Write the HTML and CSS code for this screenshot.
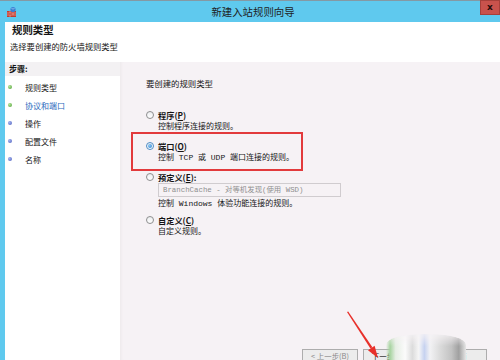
FILE: index.html
```html
<!DOCTYPE html>
<html lang="zh-CN">
<head>
  <meta charset="UTF-8">
  <title>新建入站规则向导</title>
  <link rel="stylesheet" href="styles.css">
</head>
<body>
  <div class="window">
    <div class="titlebar">
      <svg class="app-icon" viewBox="0 0 12 12">
        <rect x="1" y="5" width="9" height="6" fill="#c23b2e"/>
        <path d="M1 7h9M1 9h9M4 5v2M7 7v2M4 9v2" stroke="#f1b7ae" stroke-width="0.6"/>
        <circle cx="7" cy="3.5" r="2.6" fill="#3b7fd4"/>
        <path d="M5.5 2.5q1.5 1 3 0" stroke="#a9d6f5" stroke-width="0.7" fill="none"/>
      </svg>
      <div class="title">新建入站规则向导</div>
      <div class="close">x</div>
    </div>

    <div class="frame">
      <div class="header">
        <div class="header-title">规则类型</div>
        <div class="header-sub">选择要创建的防火墙规则类型</div>
      </div>

      <div class="main">
        <div class="steps">
          <div class="steps-head">步骤:</div>
          <ul class="step-list">
            <li class="step done">规则类型</li>
            <li class="step done current">协议和端口</li>
            <li class="step">操作</li>
            <li class="step">配置文件</li>
            <li class="step">名称</li>
          </ul>
        </div>

        <div class="content">
          <p class="prompt">要创建的规则类型</p>

          <div class="options">
            <div class="option first">
              <span class="radio"></span>
              <span class="label">程序(<u>P</u>)</span>
              <span class="desc">控制程序连接的规则。</span>
            </div>
            <div class="option picked">
              <span class="radio checked"></span>
              <span class="label">端口(<u>O</u>)</span>
              <span class="desc">控制 TCP 或 UDP 端口连接的规则。</span>
            </div>
            <div class="option">
              <span class="radio"></span>
              <span class="label">预定义(<u>E</u>):</span>
              <span class="combo">BranchCache - 对等机发现(使用 WSD)</span>
              <span class="desc spaced">控制 Windows 体验功能连接的规则。</span>
            </div>
            <div class="option last">
              <span class="radio"></span>
              <span class="label">自定义(<u>C</u>)</span>
              <span class="desc">自定义规则。</span>
            </div>
          </div>

          <div class="buttons">
            <button class="btn muted">&lt; 上一步(<u>B</u>)</button>
            <button class="btn">下一步(<u>N</u>) &gt;</button>
            <button class="btn cancel">取消</button>
          </div>
        </div>
      </div>
    </div>

    <div class="smudge"></div>
    <svg class="arrow" viewBox="0 0 45 55">
      <polygon points="7,7 8.2,6.4 32.4,42.2 30.4,43.6" fill="#e8302a"/>
      <polygon points="38,53 34.6,40.8 28,45.2" fill="#e8302a"/>
    </svg>
  </div>
</body>
</html>
```

FILE: styles.css
```css
* {
  box-sizing: border-box;
  margin: 0;
  padding: 0;
}
html, body {
  width: 500px;
  height: 360px;
  overflow: hidden;
}
body {
  font-family: "Noto Sans CJK SC", sans-serif;
  color: #151515;
  background: #fff;
}
u {
  text-decoration: underline;
}

.window {
  position: relative;
  width: 500px;
  height: 360px;
  display: flex;
  flex-direction: column;
  overflow: hidden;
}

/* title bar */
.titlebar {
  height: 22px;
  flex: none;
  display: flex;
  align-items: center;
  background: #5fc9ee;
  border-top: 1px solid #8499a4;
}
.app-icon {
  width: 12px;
  height: 12px;
  margin-left: 6px;
  flex: none;
}
.title {
  flex: 1;
  text-align: center;
  padding-left: 8px;
  font-size: 10.4px;
  color: #1e1e1e;
}
.close {
  align-self: flex-start;
  width: 20px;
  height: 15px;
  margin-top: -1px;
  background: #c9524c;
  border: 1px solid #a7403a;
  color: #2a0d0a;
  font-family: "DejaVu Sans", sans-serif;
  font-weight: bold;
  font-size: 9px;
  line-height: 12px;
  text-align: center;
}

/* body */
.frame {
  flex: 1;
  display: flex;
  flex-direction: column;
  border-left: 5px solid #5fc9ee;
  min-height: 0;
}
.header {
  height: 40px;
  flex: none;
  padding: 2px 0 0 7px;
  background: #fff;
}
.header-title {
  font-size: 10.4px;
  font-weight: bold;
  line-height: 12px;
}
.header-sub {
  margin-top: 5px;
  margin-left: -2px;
  font-size: 8.3px;
  line-height: 10px;
}

.main {
  flex: 1;
  display: flex;
  min-height: 0;
}

/* steps */
.steps {
  width: 115px;
  flex: none;
  background: #fff;
}
.steps-head {
  height: 14px;
  padding-left: 4px;
  background: #f3f1f3;
  font-size: 8px;
  font-weight: bold;
  line-height: 13px;
}
.step-list {
  list-style: none;
  padding-top: 2px;
}
.step {
  display: flex;
  align-items: center;
  height: 18px;
  padding-left: 3px;
  font-size: 8px;
}
.step::before {
  content: "";
  width: 4px;
  height: 4px;
  margin-right: 13px;
  border-radius: 50%;
  background: radial-gradient(circle at 35% 35%, #a4b3f0, #4f60bd);
}
.step.done::before {
  background: radial-gradient(circle at 35% 35%, #b4e59a, #4d9f33);
}
.step.current {
  color: #2b6bbd;
}

/* options */
.content {
  flex: 1;
  display: flex;
  flex-direction: column;
  padding-top: 16px;
  background: #f6f2f5;
  box-shadow: inset 3px 0 3px -2px #ece8ea;
}
.prompt {
  margin-left: 26px;
  font-size: 8.4px;
  line-height: 10px;
}
.options {
  margin-left: 11px;
  margin-top: 21px;
}
.option {
  display: grid;
  grid-template-columns: 7px auto;
  column-gap: 5px;
  align-items: center;
  padding-left: 15px;
}
.option.picked {
  width: 172px;
  padding: 6px 0 6px 13px;
  border: 2px solid #e23a3c;
}
.option.last {
  margin-top: 5px;
}
.radio {
  width: 8px;
  height: 8px;
  border-radius: 50%;
  border: 1px solid #8d8e8f;
  background: linear-gradient(#eceef0, #fff);
  position: relative;
}
.radio.checked {
  border-color: #4d8cc6;
}
.radio.checked::after {
  content: "";
  position: absolute;
  left: 1px;
  top: 1px;
  width: 4px;
  height: 4px;
  border-radius: 50%;
  background: radial-gradient(circle at 35% 35%, #8cc8f5, #2a7fd0);
}
.label {
  font-size: 8.2px;
  font-weight: bold;
  line-height: 12px;
}
.desc {
  grid-column: 2;
  font-family: "Liberation Mono", "Noto Sans CJK SC", monospace;
  font-size: 8px;
  line-height: 11px;
}
.desc.spaced {
  margin-top: 1px;
}
.combo {
  grid-column: 2;
  width: 183px;
  height: 14px;
  padding-left: 4px;
  border: 1px solid #d0cccf;
  color: #8f8f8f;
  font-family: "Liberation Mono", "Noto Sans CJK SC", monospace;
  font-size: 7.4px;
  line-height: 12px;
  white-space: nowrap;
}

/* buttons: the window cuts them off at the bottom edge */
.buttons {
  margin-top: auto;
  height: 11px;
  display: flex;
  justify-content: flex-end;
  align-items: flex-start;
  gap: 5px;
  padding-right: 13px;
}
.btn {
  width: 56px;
  height: 11px;
  flex: none;
  padding-top: 1px;
  border: 1px solid #adadad;
  border-bottom: none;
  background: #ececec;
  color: #151515;
  font-family: "Noto Sans CJK SC", sans-serif;
  font-size: 7.4px;
  line-height: 8px;
  text-align: center;
  vertical-align: top;
}
.btn.muted {
  color: #8a8a8a;
}
.btn.cancel {
  margin-left: 7px;
}

/* overlays */
.smudge {
  position: absolute;
  left: 386px;
  top: 334px;
  width: 80px;
  height: 30px;
  border-radius: 45% 45% 0 0 / 35% 35% 0 0;
  background: linear-gradient(90deg, rgba(200, 230, 200, 0) 0, #a6d39f 5%, #e6eee4 12%, #fbfbfb 24%, #dcdcdc 33%, #f6f6f6 41%, #c6d2f0 48%, #f2f2f4 55%, #dadada 68%, #c2c2c2 82%, #a0a0a0 91%, #e6e6e6 100%);
  -webkit-mask-image: linear-gradient(rgba(0, 0, 0, 0.2), #000 40%);
  mask-image: linear-gradient(rgba(0, 0, 0, 0.2), #000 40%);
}
.arrow {
  position: absolute;
  left: 340px;
  top: 305px;
  width: 45px;
  height: 55px;
}
```
